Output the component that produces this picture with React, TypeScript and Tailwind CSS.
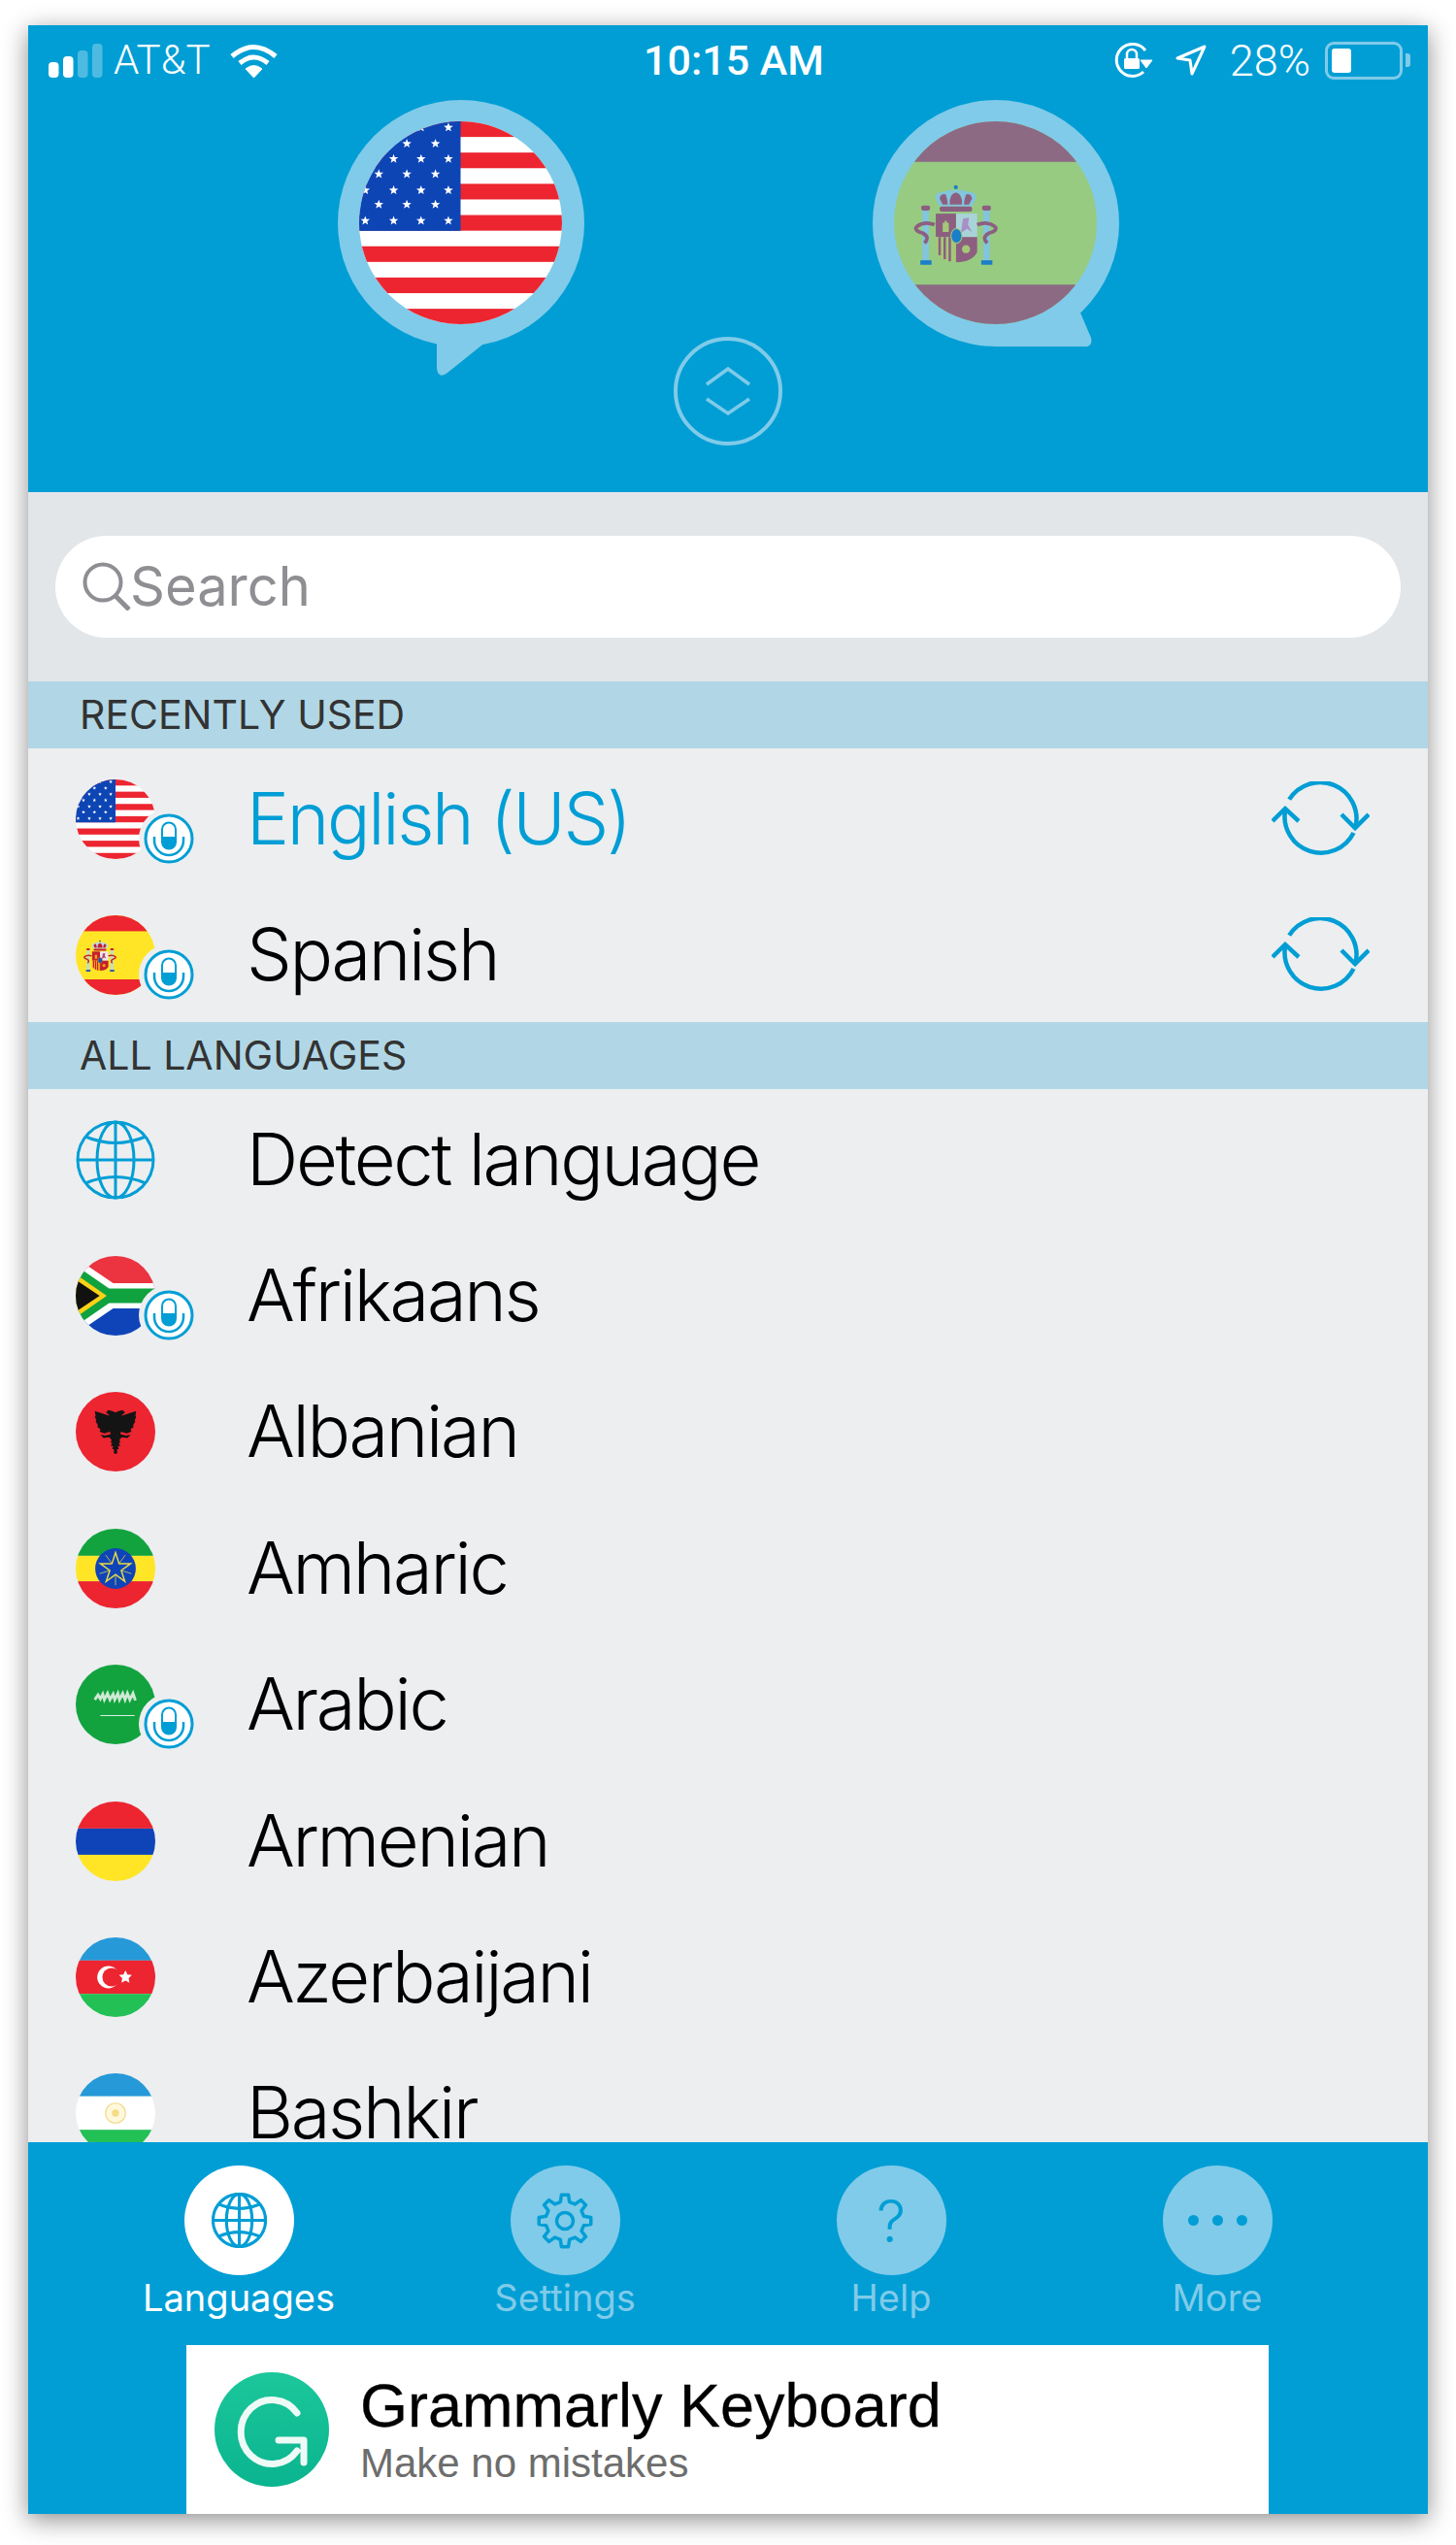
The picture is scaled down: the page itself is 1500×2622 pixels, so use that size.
import type { ReactNode } from "react";

const BLUE = "#009ed5";

function starPoints(cx: number, cy: number, r: number, inner = 0.42) {
  const pts: string[] = [];
  for (let i = 0; i < 10; i++) {
    const rad = i % 2 === 0 ? r : r * inner;
    const a = (Math.PI / 5) * i - Math.PI / 2;
    pts.push(`${cx + rad * Math.cos(a)},${cy + rad * Math.sin(a)}`);
  }
  return pts.join(" ");
}

function gearPath(cx: number, cy: number, teeth: number, outer: number, inner: number) {
  const parts: string[] = [];
  const step = (Math.PI * 2) / teeth;
  for (let i = 0; i < teeth; i++) {
    const a = i * step - Math.PI / 2;
    const list: [number, number][] = [
      [a - step * 0.3, inner],
      [a - step * 0.17, outer],
      [a + step * 0.17, outer],
      [a + step * 0.3, inner],
    ];
    list.forEach(([an, r]) => parts.push(`${cx + r * Math.cos(an)} ${cy + r * Math.sin(an)}`));
  }
  return "M" + parts.join("L") + "Z";
}

function UsFlag() {
  const stripes = [0, 2, 4, 6, 8, 10, 12];
  const rows = [3, 11, 18.5, 26, 34, 41, 49];
  return (
    <svg viewBox="0 0 100 100" className="block h-full w-full">
      <rect width="100" height="100" fill="#fff" />
      {stripes.map((s) => (
        <rect key={s} y={s * 7.7} width="100" height="7.7" fill="#ec2530" />
      ))}
      <rect width="50" height="54" fill="#0d45b5" />
      {rows.map((y, i) =>
        (i % 2 === 0 ? [44, 30.5, 17, 3] : [37.6, 23.5, 9.7]).map((x) => (
          <polygon key={`${x}-${y}`} points={starPoints(x, y, 2.4)} fill="#fff" />
        )),
      )}
    </svg>
  );
}

function SpainFlag({ dim }: { dim?: boolean }) {
  const red = dim ? "#8c6a84" : "#ec2530";
  const yellow = dim ? "#97cb82" : "#ffe526";
  const maroon = dim ? "#8c5f80" : "#c4202f";
  const sky = dim ? "#82c5dc" : "#b9dce8";
  const pale = dim ? "#a8d4d8" : "#efe6ee";
  const purple = dim ? "#a98fc8" : "#b04a78";
  const royal = dim ? "#1a7fc8" : "#1d4fb5";
  const stripe = dim ? "#a5c878" : "#f0a020";
  return (
    <svg viewBox="0 0 100 100" className="block h-full w-full">
      <rect width="100" height="100" fill={yellow} />
      <rect width="100" height="20" fill={red} />
      <rect y="80.5" width="100" height="20" fill={red} />
      {/* crown */}
      <circle cx="30.500" cy="32.500" r="1" fill={royal} />
      <path d="M20.500 38 Q20.500 34.500 24 35 Q27 33.500 30.500 34 Q34 33.500 37 35 Q40.500 34.500 40.500 38 L38.500 42 H22.500 Z" fill={sky} />
      <path d="M22.500 38 Q23 35.500 25.500 36 Q26.500 39 26.500 41 H24 Z" fill={maroon} />
      <path d="M27.500 41 Q27 36 30.500 35 Q34 36 33.500 41 Z" fill={maroon} />
      <path d="M38.500 38 Q38 35.500 35.500 36 Q34.500 39 34.500 41 H37 Z" fill={maroon} />
      <rect x="22.500" y="42" width="16" height="2.500" rx="1" fill={maroon} />
      {/* shield */}
      <rect x="20.600" y="45.500" width="10" height="11.500" fill={maroon} />
      <path d="M24 54.500 V50 H25 V49 H26 V50 H27 V54.500 Z" fill={stripe} />
      <rect x="30.600" y="45.500" width="10.400" height="11.500" fill={pale} />
      <path d="M33 55 L34 48 L37 47.500 L36.500 51 L38.500 54.500 L36 53 Z" fill={purple} />
      <path d="M20.600 57 H30.600 V69.500 Q23 69.500 20.600 64.500 Z" fill={stripe} />
      <path d="M22.500 57 V66 M25 57 V68 M27.500 57 V69" stroke={maroon} strokeWidth="1.200" />
      <path d="M30.600 57 H41 V64.500 Q38.500 69.500 30.600 69.500 Z" fill={maroon} />
      <circle cx="35.500" cy="63" r="2" fill={stripe} />
      <ellipse cx="30.800" cy="56.500" rx="2.700" ry="3.600" fill={royal} stroke={stripe} strokeWidth="0.500" />
      {/* pillars */}
      <rect x="14" y="44" width="3.200" height="24.500" fill={sky} />
      <rect x="44" y="44" width="3.200" height="24.500" fill={sky} />
      <rect x="13.400" y="41.500" width="4.400" height="2.500" rx="1" fill={maroon} />
      <rect x="43.400" y="41.500" width="4.400" height="2.500" rx="1" fill={maroon} />
      <path d="M11 52 Q15 49 20 51 M11 52 Q10 54 14 55 Q18 57 15 60 M50 52 Q46 49 41 51 M50 52 Q51 54 47 55 Q43 57 46 60" stroke={maroon} strokeWidth="1.800" fill="none" />
      <rect x="13" y="68.500" width="5.500" height="2.200" fill={royal} />
      <rect x="43" y="68.500" width="5.500" height="2.200" fill={royal} />
    </svg>
  );
}

function SouthAfricaFlag() {
  return (
    <svg viewBox="0 0 100 100" className="block h-full w-full">
      <rect width="100" height="50" fill="#ec3340" />
      <rect y="50" width="100" height="50" fill="#0f44b8" />
      <path d="M0 2 L47 34 H100 V66 H47 L0 98 Z" fill="#fff" />
      <path d="M0 12 L42 41 H100 V59 H42 L0 88 Z" fill="#0fa23f" />
      <path d="M0 23 L39 50 L0 77 Z" fill="#fcd116" />
      <path d="M0 30 L30 50 L0 70 Z" fill="#111" />
    </svg>
  );
}

function AlbaniaFlag() {
  const half =
    "M50 26 L46 24 L41 23 L38 26 L42 29 L42 30 L24 24 L25 30 L24 31 L26 36 L25 37 L28 42 L27 44 L31 47 L30 50 L36 52 L43 50 L44 53 L37 55 L31 54 L35 58 L42 57 L45 60 L44 64 L46 64 L44 68 L47 68 L46 72 L48 72 L48 77 L50 78 Z";
  return (
    <svg viewBox="0 0 100 100" className="block h-full w-full">
      <rect width="100" height="100" fill="#ec2530" />
      <path d={half} fill="#141414" />
      <path d={half} fill="#141414" transform="matrix(-1 0 0 1 100 0)" />
    </svg>
  );
}

function EthiopiaFlag() {
  const rays = [0, 1, 2, 3, 4].map((i) => {
    const a = (Math.PI * 2 * i) / 5 + Math.PI / 2;
    return `M${50 + 9 * Math.cos(a)} ${50 + 9 * Math.sin(a)}L${50 + 21 * Math.cos(a)} ${50 + 21 * Math.sin(a)}`;
  });
  return (
    <svg viewBox="0 0 100 100" className="block h-full w-full">
      <rect width="100" height="34" fill="#12a33f" />
      <rect y="34" width="100" height="32" fill="#ffe526" />
      <rect y="66" width="100" height="34" fill="#ec2530" />
      <circle cx="50" cy="50" r="25.500" fill="#0f44b8" />
      <path d={rays.join(" ")} stroke="#d8cf55" strokeWidth="1" />
      <polygon points={starPoints(50, 50, 20, 0.38)} fill="none" stroke="#e8d848" strokeWidth="1.800" />
    </svg>
  );
}

function SaudiFlag() {
  return (
    <svg viewBox="0 0 100 100" className="block h-full w-full">
      <rect width="100" height="100" fill="#12a33f" />
      <path
        d="M24 44 l4 -6 l3 5 l3 -6 l2 7 l4 -8 l3 8 l4 -7 l2 7 l4 -8 l2 8 l4 -8 l3 8 l3 -8 l3 8 l4 -8 l3 9"
        fill="none"
        stroke="#cfe9d4"
        strokeWidth="3.500"
      />
      <path d="M31 64 H74" stroke="#e4f3e6" strokeWidth="1.200" />
    </svg>
  );
}

function ArmeniaFlag() {
  return (
    <svg viewBox="0 0 100 100" className="block h-full w-full">
      <rect width="100" height="34" fill="#ec2530" />
      <rect y="34" width="100" height="33" fill="#0f44b8" />
      <rect y="67" width="100" height="33" fill="#ffe526" />
    </svg>
  );
}

function AzerbaijanFlag() {
  return (
    <svg viewBox="0 0 100 100" className="block h-full w-full">
      <rect width="100" height="29" fill="#2699d8" />
      <rect y="29" width="100" height="42" fill="#ec2530" />
      <rect y="71" width="100" height="29" fill="#22c055" />
      <circle cx="41" cy="50" r="14" fill="#fff" />
      <circle cx="45" cy="50" r="11.500" fill="#ec2530" />
      <polygon points={starPoints(62.500, 50, 8.500, 0.5)} fill="#fff" />
    </svg>
  );
}

function BashkirFlag() {
  return (
    <svg viewBox="0 0 100 100" className="block h-full w-full">
      <rect width="100" height="29" fill="#2699d8" />
      <rect y="29" width="100" height="42" fill="#fff" />
      <rect y="71" width="100" height="29" fill="#22c055" />
      <circle cx="50" cy="50" r="12.500" fill="#fff8dc" stroke="#f3dc8e" strokeWidth="1.500" />
      <circle cx="50" cy="50" r="4.500" fill="#f5dc86" />
    </svg>
  );
}

function GlobeIcon({ stroke = 3 }: { stroke?: number }) {
  return (
    <svg viewBox="0 0 82 82" className="block h-full w-full" fill="none" stroke={BLUE} strokeWidth={stroke}>
      <circle cx="41" cy="41" r="39" />
      <ellipse cx="41" cy="41" rx="19" ry="39" />
      <path d="M41 2 V80 M2 41 H80" />
      <path d="M10 17 Q41 30 72 17 M10 65 Q41 52 72 65" />
    </svg>
  );
}

function MicBadge() {
  return (
    <div className="absolute left-[65px] top-[30px] h-[62px] w-[62px]">
      <svg viewBox="0 0 62 62" className="block h-full w-full">
        <circle cx="31" cy="31" r="31" fill="#eceef0" />
        <circle cx="31" cy="31" r="24" fill="#fff" stroke={BLUE} strokeWidth="3" />
        <rect x="24" y="14.500" width="14" height="27" rx="7" fill="#fff" stroke={BLUE} strokeWidth="2" />
        <path d="M24 29 H38 V35 A7 7 0 0 1 24 35 Z" fill={BLUE} />
        <path d="M16 29 V33 A15 15 0 0 0 46 33 V29" fill="none" stroke={BLUE} strokeWidth="2.500" />
      </svg>
    </div>
  );
}

function SyncIcon() {
  return (
    <svg viewBox="0 0 101 78" className="h-[78px] w-[101px]" fill="none" stroke={BLUE} strokeWidth="4.500">
      <path d="M18.200 18.600 A37.500 37.500 0 0 1 86.500 47" />
      <path d="M14 30 A37.500 37.500 0 0 0 84.500 53" />
      <path d="M72 34 L86 48 L100 34" />
      <path d="M1 41 L14 28 L28 41" />
    </svg>
  );
}

type Lang = { name: string; flag: ReactNode; mic?: boolean };

const recent: (Lang & { color?: string })[] = [
  { name: "English (US)", flag: <UsFlag />, mic: true, color: "text-[#009ed5]" },
  { name: "Spanish", flag: <SpainFlag />, mic: true },
];

const all: Lang[] = [
  { name: "Detect language", flag: <GlobeIcon /> },
  { name: "Afrikaans", flag: <SouthAfricaFlag />, mic: true },
  { name: "Albanian", flag: <AlbaniaFlag /> },
  { name: "Amharic", flag: <EthiopiaFlag /> },
  { name: "Arabic", flag: <SaudiFlag />, mic: true },
  { name: "Armenian", flag: <ArmeniaFlag /> },
  { name: "Azerbaijani", flag: <AzerbaijanFlag /> },
  { name: "Bashkir", flag: <BashkirFlag /> },
];

function Row({ lang, color, sync }: { lang: Lang; color?: string; sync?: boolean }) {
  return (
    <div className="flex h-[140.4px] shrink-0 items-center pl-[49px] pr-[60px] pt-[5px]">
      <div className="relative mr-[94px] h-[82px] w-[82px] shrink-0">
        <div className="h-full w-full overflow-hidden rounded-full">{lang.flag}</div>
        {lang.mic && <MicBadge />}
      </div>
      <span className={`-mt-[2px] flex-1 text-[74px] font-[340] leading-none tracking-[-2.3px] ${color ?? "text-black"}`}>
        {lang.name}
      </span>
      {sync && <SyncIcon />}
    </div>
  );
}

function SectionBand({ label }: { label: string }) {
  return (
    <div className="flex h-[69px] shrink-0 items-center bg-[#b1d7e6] pl-[53px] text-[41px] leading-none text-[#333]">
      {label}
    </div>
  );
}

function TabItem({ label, active, children }: { label: string; active?: boolean; children: ReactNode }) {
  return (
    <div className="flex flex-col items-center">
      <div
        className={`flex h-[113px] w-[113px] items-center justify-center rounded-full ${active ? "bg-white" : "bg-[#80cbe9]"}`}
      >
        {children}
      </div>
      <span className={`text-[38px] leading-[46px] ${active ? "text-white" : "text-[#80cbe9]"}`}>{label}</span>
    </div>
  );
}

export default function App() {
  return (
    <div className="h-[2622px] w-[1500px] overflow-hidden bg-white pl-[29px] pt-[26px] font-['Inter',sans-serif]">
      <div className="flex h-[2564px] w-[1442px] flex-col overflow-hidden bg-[#eceef0] shadow-[0_6px_24px_rgba(0,0,0,0.45)]">
        {/* top blue area */}
        <div className="h-[481px] shrink-0 bg-[#009ed5]">
          <div className="grid h-[77px] grid-cols-[1fr_auto_1fr] items-center pb-[5px] font-['Roboto',sans-serif] text-white">
            <div className="flex items-center pl-[21px]">
              <svg viewBox="0 0 56 35" className="h-[35px] w-[56px]" fill="#fff">
                <rect y="19" width="10.500" height="16" rx="4" />
                <rect x="15" y="13" width="10.500" height="22" rx="4" />
                <rect x="30" y="7" width="10.500" height="28" rx="4" opacity="0.3" />
                <rect x="45" width="10.500" height="35" rx="4" opacity="0.3" />
              </svg>
              <span className="ml-[11px] text-[42px] font-light leading-none">AT&amp;T</span>
              <svg viewBox="0 0 49 35" className="ml-[20px] h-[35px] w-[49px]" fill="none" stroke="#fff">
                <path d="M2 13 Q24 -6 47 13" strokeWidth="5" />
                <path d="M10 20 Q24 8 39 20" strokeWidth="5" />
                <path d="M16 26 L24.500 35 L33 26 Q24.500 19 16 26 Z" fill="#fff" strokeWidth="1" />
              </svg>
            </div>
            <span className="ml-[12px] text-[43px] font-medium leading-none">10:15 AM</span>
            <div className="flex items-center justify-end pr-[18px]">
              <svg viewBox="0 0 40 36" className="h-[36px] w-[40px]" fill="none" stroke="#fff" strokeWidth="3">
                <path d="M32 8 A16.500 16.500 0 1 0 30 30" />
                <path d="M27 18 H39 L33 26 Z" fill="#fff" strokeWidth="1" />
                <path d="M13 16 V12 A5 5 0 0 1 23 12 V16" strokeWidth="2.500" />
                <rect x="10" y="16" width="16" height="11" rx="1.500" fill="#fff" stroke="none" />
              </svg>
              <svg viewBox="0 0 32 32" className="ml-[23px] h-[32px] w-[32px]" fill="none" stroke="#fff" strokeWidth="3">
                <path d="M2 14 L30 2 L17 30 L15 16 Z" strokeLinejoin="round" />
              </svg>
              <span className="ml-[24px] text-[45px] font-light leading-none">28%</span>
              <div className="ml-[15px] flex items-center">
                <div className="h-[39px] w-[80px] rounded-[9px] border-[3px] border-[#80cbe9] p-[4px]">
                  <div className="h-full w-[20px] rounded-[3px] bg-white" />
                </div>
                <div className="ml-[3px] h-[14px] w-[5px] rounded-r-[3px] bg-[#80cbe9]" />
              </div>
            </div>
          </div>
          <div className="flex items-start pl-[318px]">
            <div className="relative h-[291px] w-[256px] shrink-0">
              <svg viewBox="0 0 256 291" className="block h-full w-full" fill="#80cbe9">
                <circle cx="128" cy="127" r="127" />
                <path d="M103 240 V277 Q105 288 114 281 L200 212 Z" />
              </svg>
              <div className="absolute left-[23px] top-[22px] h-[209px] w-[209px] overflow-hidden rounded-full">
                <UsFlag />
              </div>
            </div>
            <div className="ml-[91px] mt-[244px] h-[112px] w-[112px] shrink-0">
              <svg viewBox="0 0 112 112" className="block h-full w-full" fill="none" stroke="#80cbe9" strokeWidth="3.500">
                <circle cx="56" cy="56" r="54" strokeWidth="4" />
                <path d="M34 49 L56 33 L78 49 M34 64 L56 79 L78 64" />
              </svg>
            </div>
            <div className="relative ml-[92px] h-[256px] w-[256px] shrink-0">
              <svg viewBox="0 0 256 256" className="block h-full w-full" fill="#80cbe9">
                <circle cx="128" cy="127" r="127" />
                <path d="M128 254 H222 Q228 252 226 245 L212 212 L150 180 Z" />
              </svg>
              <div className="absolute left-[23px] top-[22px] h-[209px] w-[209px] overflow-hidden rounded-full">
                <SpainFlag dim />
              </div>
            </div>
          </div>
        </div>

        {/* search */}
        <div className="flex h-[195px] shrink-0 items-start bg-[#e2e6e9] px-[28px] pt-[45px]">
          <div className="flex h-[105px] w-full items-center rounded-full bg-white pb-[2px] pl-[28px]">
            <svg viewBox="0 0 50 50" className="h-[50px] w-[50px]" fill="none" stroke="#8e8e93" strokeWidth="4">
              <circle cx="21" cy="21" r="18.500" />
              <path d="M34 35 L48 49" strokeWidth="5" />
            </svg>
            <span className="-ml-[1px] text-[56px] leading-none text-[#8e8e93]">Search</span>
          </div>
        </div>

        <SectionBand label="RECENTLY USED" />
        <div className="flex h-[282px] shrink-0 flex-col">
          {recent.map((l) => (
            <Row key={l.name} lang={l} color={l.color} sync />
          ))}
        </div>
        <SectionBand label="ALL LANGUAGES" />
        <div className="flex min-h-0 flex-1 flex-col overflow-hidden">
          {all.map((l) => (
            <Row key={l.name} lang={l} />
          ))}
        </div>

        {/* tab bar + ad */}
        <div className="h-[383px] shrink-0 bg-[#009ed5]">
          <div className="grid h-[209px] grid-cols-4 justify-items-center px-[49px] pt-[24px]">
            <TabItem label="Languages" active>
              <div className="h-[57px] w-[57px]">
                <GlobeIcon stroke={4.500} />
              </div>
            </TabItem>
            <TabItem label="Settings">
              <svg viewBox="0 0 58 58" className="h-[58px] w-[58px]" fill="none" stroke={BLUE} strokeWidth="3.500">
                <path d={gearPath(29, 29, 8, 27, 20)} strokeLinejoin="round" />
                <circle cx="29" cy="29" r="8.500" />
              </svg>
            </TabItem>
            <TabItem label="Help">
              <span className="text-[60px] font-light leading-none text-[#009ed5]">?</span>
            </TabItem>
            <TabItem label="More">
              <div className="flex gap-[14px]">
                <div className="h-[11px] w-[11px] rounded-full bg-[#009ed5]" />
                <div className="h-[11px] w-[11px] rounded-full bg-[#009ed5]" />
                <div className="h-[11px] w-[11px] rounded-full bg-[#009ed5]" />
              </div>
            </TabItem>
          </div>
          <div className="ml-[163px] flex h-[174px] w-[1115px] items-center bg-white pl-[29px] font-['Liberation_Sans',sans-serif]">
            <svg viewBox="0 0 118 118" className="h-[118px] w-[118px] shrink-0">
              <defs>
                <linearGradient id="gr" x1="0" y1="0" x2="0" y2="1">
                  <stop offset="0" stopColor="#1cc79b" />
                  <stop offset="1" stopColor="#0ab48f" />
                </linearGradient>
              </defs>
              <circle cx="59" cy="59" r="59" fill="url(#gr)" />
              <path
                d="M85 42 A32 33 0 1 0 85 81 M66 70 H92 V93"
                fill="none"
                stroke="#eefaf6"
                strokeWidth="7"
                strokeLinecap="round"
                strokeLinejoin="round"
              />
            </svg>
            <div className="ml-[32px] flex flex-col">
              <span className="text-[63px] leading-[64px] text-black [-webkit-text-stroke:0.3px_black]">Grammarly Keyboard</span>
              <span className="mt-[5px] text-[42px] leading-[46px] text-[#6d6d6d]">Make no mistakes</span>
            </div>
          </div>
        </div>
      </div>
    </div>
  );
}
